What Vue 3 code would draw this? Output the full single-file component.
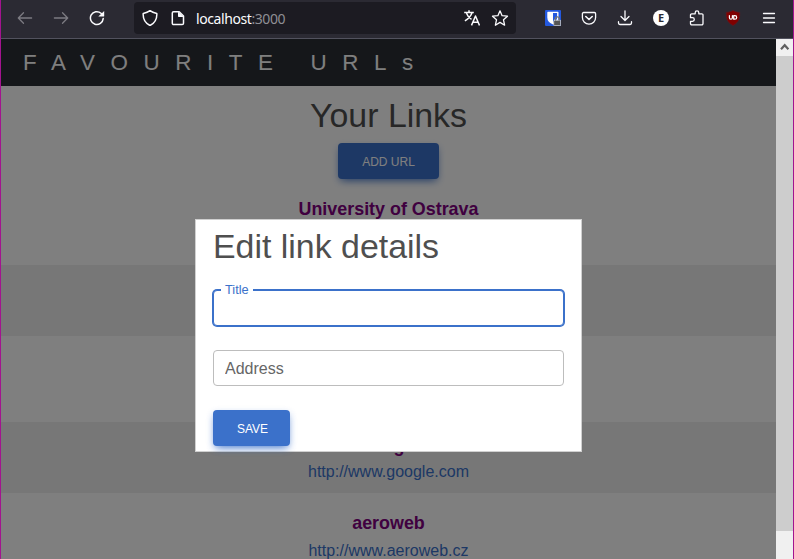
<script setup>
import { ref } from 'vue'

const links = [
  { title: 'University of Ostrava', url: '', size: 'first' },
  { title: '', url: '', size: 'shaded' },
  { title: '', url: '', size: 'tall' },
  { title: 'Google', url: 'http://www.google.com', size: 'shaded' },
  { title: 'aeroweb', url: 'http://www.aeroweb.cz', size: 'last' }
]
const title = ref('')
const address = ref('')
</script>

<template>
  <div class="window">
    <div class="toolbar">
      <div class="nav">
        <svg class="dim" width="16" height="16" viewBox="0 0 16 16"><path d="M14.6 8H1.5M6.5 2.8 1.3 8l5.2 5.2" /></svg>
        <svg class="dim" width="16" height="16" viewBox="0 0 16 16"><path d="M1.4 8h13.1M9.5 2.8 14.7 8l-5.2 5.2" /></svg>
        <svg width="16" height="16" viewBox="0 0 16 16"><path d="M14.200 8.600A6.400 6.400 0 1 1 12 3.200l1.500 1.500" stroke-width="1.500" /><path class="solid" d="M15.200 1v5c0 .4-.3.6-.6.6H9.300z" /></svg>
      </div>
      <div class="address">
        <svg width="16" height="16" viewBox="0 0 16 16"><path d="M8 .7C6 2.300 3.800 3 1.200 3.500c-.3 5 1.600 9.500 6.800 12 5.200-2.500 7.100-7 6.800-12C12.200 3 10 2.300 8 .7z" stroke-width="1.500" /></svg>
        <svg class="doc" width="16" height="16" viewBox="0 0 16 16"><path d="M3.600 1.700h5.600l4.300 4.300v7.300a1.300 1.300 0 0 1-1.300 1.300H3.600a1.300 1.300 0 0 1-1.300-1.300V3a1.300 1.300 0 0 1 1.300-1.300z" stroke-width="1.500" /><path class="solid" d="M8 1.500V6.200a.8.8 0 0 0 .8.8h5z" /></svg>
        <span class="host">localhost<i>:3000</i></span>
        <svg class="translate" width="16" height="16" viewBox="0 0 16 16"><path d="M.2 2.500h9.600M5 .3v2.200M8 2.800C6.800 6.500 4 9 .9 10.800M2.500 3.200C3.500 6 5.500 8.200 7.500 9.300M7.500 15.400l4-9.400 4 9.400M8.900 12.300h5.200" /></svg>
        <svg class="star" width="18" height="18" viewBox="0 0 18 18"><path d="m9 1.800 2.100 4.900 5.400.5-4 3.600 1.100 5.400L9 13.400l-4.600 2.800 1.100-5.400-4-3.600 5.400-.5z" /></svg>
      </div>
      <div class="tools">
        <svg width="16" height="16" viewBox="0 0 16 16"><rect width="16" height="16" rx="1" fill="#2459df" stroke="none" /><path d="M3 2.400h9.800v5c0 3-2.200 5-4.900 6.300C5.200 12.400 3 10.400 3 7.400z" fill="#2459df" stroke="#fff" stroke-width="1.400" /><path d="M8 2v11.700C5.200 12.400 3 10.400 3 7.400V2z" fill="#fff" stroke="none" /><rect x="8.700" y="10.200" width="7" height="5.500" rx=".8" fill="#555" stroke="#ddd" stroke-width=".8" /><path d="M10.300 10V8.900a2 2 0 0 1 4 0V10" stroke="#777" /></svg>
        <svg width="16" height="16" viewBox="0 0 16 16"><path d="M2.600 2.500h10.800a1.200 1.200 0 0 1 1.200 1.200v3.800a6.600 6.600 0 0 1-13.200 0V3.700a1.200 1.200 0 0 1 1.200-1.200z" /><path d="m4.800 6.500 3.200 3 3.200-3" stroke-width="1.600" /></svg>
        <svg width="16" height="16" viewBox="0 0 16 16"><path d="M8 .8v9.400M4 6.500l4 4 4-4M1.500 11.700v1.400c0 .8.600 1.400 1.400 1.400h10.200c.8 0 1.400-.6 1.400-1.400v-1.400" /></svg>
        <span class="account">E</span>
        <svg width="16" height="16" viewBox="0 0 16 16"><path d="M1.500 6.500V5a1.200 1.200 0 0 1 1.200-1.200h3.500V2.700a1.800 1.800 0 0 1 3.600 0v1.100h3a1.200 1.200 0 0 1 1.200 1.200v8.600a1.200 1.200 0 0 1-1.200 1.200H2.700a1.200 1.200 0 0 1-1.200-1.200v-2.300h2a1.800 1.800 0 0 0 0-3.600h-2z" /></svg>
        <svg width="16" height="16" viewBox="0 0 16 16"><path d="M8 .4C5.800 1.500 3.500 2.300 1.200 2.300c0 6 .2 9.700 6.800 13.300 6.600-3.600 6.800-7.300 6.800-13.300C12.500 2.300 10.200 1.500 8 .4z" fill="#800000" stroke="#571d25" stroke-width=".7" /><path d="M4.400 5.500v2.200a1.500 1.500 0 0 0 3 0V5.500M8.700 5.600h1.200a1.800 1.800 0 0 1 0 3.600H8.700z" stroke="#fff" stroke-width="1.200" /></svg>
        <svg width="16" height="16" viewBox="0 0 16 16"><path d="M2.500 3.500h11M2.500 8h11M2.500 12.500h11" /></svg>
      </div>
    </div>

    <div class="viewport">
      <div class="page">
        <header>FAVOURITE URLs</header>
        <section v-for="(link, i) in links" :key="i" :class="link.size">
          <template v-if="i === 0">
            <h1>Your Links</h1>
            <button>ADD URL</button>
          </template>
          <h2 v-if="link.title">{{ link.title }}</h2>
          <a v-if="link.url">{{ link.url }}</a>
        </section>
        <div class="backdrop">
          <form class="modal" @submit.prevent>
            <h1>Edit link details</h1>
            <div class="field active">
              <input id="title" v-model="title" />
              <label for="title">Title</label>
            </div>
            <div class="field">
              <input v-model="address" placeholder="Address" />
            </div>
            <button>SAVE</button>
          </form>
        </div>
      </div>
      <div class="scrollbar">
        <div class="up"><svg width="17" height="17" viewBox="0 0 17 17"><path d="m5 10.200 3.700-4 3.700 4" /></svg></div>
        <div class="thumb"></div>
      </div>
    </div>
  </div>
</template>

<style>
body { margin: 0; overflow: hidden; }
</style>

<style scoped>
* { box-sizing: border-box; }
.window {
  width: 794px; height: 559px; overflow: hidden;
  display: flex; flex-direction: column;
  border-left: 1px solid #a3138f; border-right: 1px solid #a3138f;
  font-family: "Liberation Sans", Arial, sans-serif;
}
.toolbar {
  height: 39px; flex: none; display: flex;
  background: #2b2a33; border-bottom: 1px solid #52525e;
}
svg { display: block; flex: none; fill: none; stroke: #fbfbfe; stroke-width: 1.3; stroke-linecap: round; stroke-linejoin: round; }
.solid { fill: #fbfbfe; stroke: none; }
.dim { stroke: #7c7b82; }
.nav { display: flex; gap: 20px; padding: 10px 0 0 16px; width: 133px; }
.address {
  width: 382px; height: 32px; margin-top: 2px; padding: 0 7px 0 8px;
  display: flex; align-items: center; border-radius: 4px; background: #1c1b22;
}
.doc { margin-left: 12px; }
.host { flex: 1; margin-left: 10px; padding-top: 2px; font: 14px/20px "Noto Sans", sans-serif; letter-spacing: -.42px; color: #fbfbfe; }
.host i { font-style: normal; color: #8f8f95; }
.translate { margin-right: 11px; stroke-width: 1.5; stroke-linecap: butt; }
.tools { display: flex; gap: 20px; padding: 10px 0 0 29px; }
.account {
  width: 16px; height: 16px; border-radius: 50%; background: #fff; color: #2b2a33;
  font: bold 11px/16px "Noto Sans", sans-serif; text-align: center;
}
.viewport { flex: 1; min-height: 0; display: flex; }
.page { position: relative; width: 775px; height: 520px; overflow: hidden; background: #fff; text-align: center; }
header {
  height: 47px; padding-left: 22px; background: #2b2e34; color: #fff;
  text-align: left; font-size: 22.4px; line-height: 47px; letter-spacing: 15.6px; white-space: nowrap;
}
section { height: 71px; padding-top: 14px; }
.first { height: 179px; padding-top: 9px; }
.shaded { background: #eee; }
.tall { height: 86px; }
.last { height: 86px; padding-top: 20px; }
h1 { margin: 0; font-size: 33.9px; line-height: 40px; font-weight: 400; color: #4f4f4f; }
h2 { margin: 0; font-size: 17.9px; line-height: 21px; color: #800080; }
a { display: block; padding-top: 2px; font-size: 16px; line-height: 26px; color: #3b71ca; }
.last a { padding-top: 4px; }
button {
  display: block; height: 36px; padding: 1px 24px 0; border: 0; border-radius: 4px;
  background: #3b71ca; color: #fff; font: 12px/18px "Liberation Sans", Arial, sans-serif;
  box-shadow: 0 4px 9px -4px #3b71ca, 0 3px 7px rgba(59, 113, 202, .3);
}
.first button { width: 101px; margin: 8px auto 20px; }
.backdrop { position: absolute; inset: 0; background: rgba(0, 0, 0, .5); }
.modal {
  position: absolute; left: 194px; top: 180px; width: 387px; height: 233px;
  padding: 6px 17px 0; border: 1px solid #d0d0d0; background: #fff; text-align: left;
}
.modal h1 { margin-bottom: 24px; }
.field { position: relative; height: 36px; margin-bottom: 24px; }
.field input {
  display: block; width: 100%; height: 36px; padding: 1px 11px 0; border: 1px solid #bdbdbd; border-radius: 4px;
  outline: 0; background: #fff; font: 16px/24px "Liberation Sans", Arial, sans-serif; color: #4f4f4f;
}
.field input::placeholder { color: #666; opacity: 1; }
.active input { border-color: #3b71ca; box-shadow: 0 0 0 1px #3b71ca; }
.field label {
  position: absolute; left: 8px; top: -7px; padding: 0 4px; background: #fff;
  color: #3b71ca; font-size: 12.8px; line-height: 14px;
}
.modal button { width: 77px; }
.scrollbar { width: 17px; background: #f0f0f0; }
.up { height: 17px; background: #f0f0f0; }
.up svg { stroke: #606060; stroke-width: 2.2; stroke-linecap: butt; stroke-linejoin: miter; }
.thumb { height: 475px; background: #cdcdcd; }
</style>
